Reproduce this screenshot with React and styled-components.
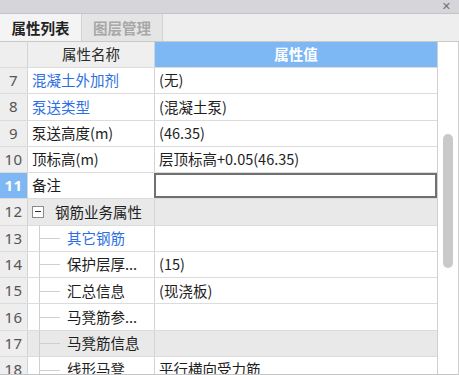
import React from "react";
import styled, { createGlobalStyle, css } from "styled-components";

const Global = createGlobalStyle`
  html, body { margin: 0; padding: 0; background: #ffffff; }
  body { font-family: "Noto Sans CJK SC", "Noto Sans", sans-serif; }
  * { box-sizing: border-box; }
`;

const Window = styled.div`
  width: 459px;
  height: 375px;
  display: flex;
  flex-direction: column;
  background: #ffffff;
  overflow: hidden;
`;

const TitleBar = styled.div`
  height: 14px;
  flex: none;
  background: #d6d6da;
  border-bottom: 1px solid #c4c4c8;
  display: flex;
  align-items: center;
  justify-content: flex-end;
  padding-right: 8px;
`;

const Close = styled.span`
  font-family: "DejaVu Sans", sans-serif;
  font-size: 11px;
  font-weight: bold;
  line-height: 1;
  color: #707070;
`;

const TabBar = styled.div`
  height: 28px;
  flex: none;
  display: flex;
  background: #eeeeee;
  border-bottom: 1px solid #c9c9c9;
`;

const Tab = styled.div`
  width: ${(p) => (p.$active ? "82px" : "81px")};
  display: flex;
  align-items: center;
  justify-content: center;
  font-size: 14.5px;
  font-weight: bold;
  border-right: 1px solid #d2d2d2;
  ${(p) =>
    p.$active
      ? css`
          background: #f4f4f4;
          color: #222222;
        `
      : css`
          background: #e5e5e5;
          color: #a8a8a8;
        `}
`;

const Body = styled.div`
  flex: 1;
  display: flex;
  min-height: 0;
  border-right: 1px solid #cfcfcf;
  border-bottom: 1px solid #c4c4c4;
`;

const Grid = styled.div`
  width: 438px;
  flex: none;
  overflow: hidden;
  border-right: 1px solid #d0d0d0;
`;

const Row = styled.div`
  display: grid;
  grid-template-columns: 28px 127px 1fr;
  height: ${(p) => (p.$header ? "26px" : "26.27px")};
  border-bottom: 1px solid #dcdcdc;
  font-size: 14.5px;
  line-height: 1;
`;

const NumCell = styled.div`
  display: flex;
  align-items: center;
  justify-content: center;
  border-right: 1px solid #d4d4d4;
  font-family: "Noto Sans", sans-serif;
  font-size: 15px;
  letter-spacing: 0.5px;
  ${(p) =>
    p.$selected
      ? css`
          background: #7db8f5;
          color: #ffffff;
          font-weight: bold;
        `
      : css`
          background: #eeeeee;
          color: #555555;
        `}
`;

const NameCell = styled.div`
  display: flex;
  align-items: center;
  padding-left: ${(p) => (p.$child ? "0" : "4px")};
  border-right: 1px solid #d4d4d4;
  white-space: nowrap;
  overflow: hidden;
  background: ${(p) => (p.$gray ? "#e9e9e9" : "#ffffff")};
  color: ${(p) => (p.$blue ? "#2c6fe3" : "#1e1e1e")};
  ${(p) =>
    p.$header &&
    css`
      justify-content: center;
      padding-left: 0;
      background: #efefef;
      color: #2a2a2a;
    `}
`;

const ValueCell = styled.div`
  display: flex;
  align-items: center;
  padding-left: 4px;
  white-space: nowrap;
  overflow: hidden;
  color: #1e1e1e;
  background: ${(p) => (p.$gray ? "#e9e9e9" : "#ffffff")};
  ${(p) =>
    p.$header &&
    css`
      justify-content: center;
      padding-left: 0;
      background: #7db8f5;
      color: #ffffff;
      font-weight: bold;
    `}
  ${(p) =>
    p.$editing &&
    css`
      border: 2px solid #707070;
      margin-left: -1px;
    `}
`;

const TreeBranch = styled.div`
  width: 12px;
  align-self: stretch;
  margin-left: 11px;
  margin-right: 16px;
  flex: none;
  position: relative;
  border-left: 1px solid #cfcfcf;
  &::after {
    content: "";
    position: absolute;
    left: 0;
    top: 50%;
    width: 20px;
    border-top: 1px solid #cfcfcf;
  }
`;

const ToggleBox = styled.span`
  width: 12px;
  height: 12px;
  flex: none;
  border: 1px solid #8a8a8a;
  background: #ffffff;
  display: flex;
  align-items: center;
  justify-content: center;
  margin-right: 11px;
  &::before {
    content: "";
    width: 6px;
    border-top: 1px solid #333333;
  }
`;

const ScrollTrack = styled.div`
  flex: 1;
  background: #ffffff;
  display: flex;
  justify-content: center;
  padding-top: 92px;
`;

const Thumb = styled.div`
  width: 10px;
  height: 134px;
  border-radius: 5px;
  background: #c9c9c9;
`;

const rows = [
  { n: 7, name: "混凝土外加剂", value: "(无)", blue: true },
  { n: 8, name: "泵送类型", value: "(混凝土泵)", blue: true },
  { n: 9, name: "泵送高度(m)", value: "(46.35)" },
  { n: 10, name: "顶标高(m)", value: "层顶标高+0.05(46.35)" },
  { n: 11, name: "备注", value: "", selected: true, editing: true },
  { n: 12, name: "钢筋业务属性", value: "", gray: true, group: true },
  { n: 13, name: "其它钢筋", value: "", child: true, blue: true },
  { n: 14, name: "保护层厚...", value: "(15)", child: true },
  { n: 15, name: "汇总信息", value: "(现浇板)", child: true },
  { n: 16, name: "马凳筋参...", value: "", child: true },
  { n: 17, name: "马凳筋信息", value: "", child: true, gray: true },
  { n: 18, name: "线形马凳", value: "平行横向受力筋", child: true },
];

export default function App() {
  return (
    <>
      <Global />
      <Window>
        <TitleBar>
          <Close>✕</Close>
        </TitleBar>
        <TabBar>
          <Tab $active>属性列表</Tab>
          <Tab>图层管理</Tab>
        </TabBar>
        <Body>
          <Grid>
            <Row $header>
              <NumCell />
              <NameCell $header>属性名称</NameCell>
              <ValueCell $header>属性值</ValueCell>
            </Row>
            {rows.map((r) => (
              <Row key={r.n}>
                <NumCell $selected={r.selected}>{r.n}</NumCell>
                <NameCell $blue={r.blue} $gray={r.gray} $child={r.child}>
                  {r.child && <TreeBranch />}
                  {r.group && <ToggleBox />}
                  {r.name}
                </NameCell>
                <ValueCell $gray={r.gray} $editing={r.editing}>
                  {r.value}
                </ValueCell>
              </Row>
            ))}
          </Grid>
          <ScrollTrack>
            <Thumb />
          </ScrollTrack>
        </Body>
      </Window>
    </>
  );
}
